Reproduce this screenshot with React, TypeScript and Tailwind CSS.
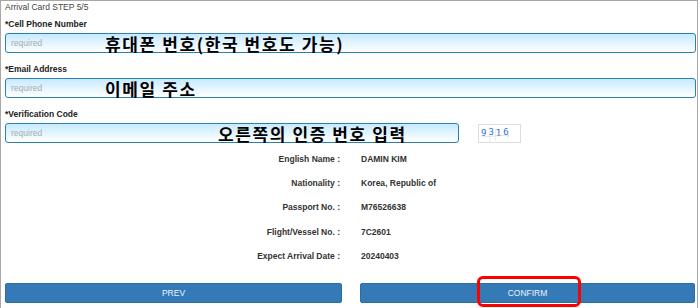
import React from "react";

const rows = [
  { label: "English Name :", value: "DAMIN KIM" },
  { label: "Nationality :", value: "Korea, Republic of" },
  { label: "Passport No. :", value: "M76526638" },
  { label: "Flight/Vessel No. :", value: "7C2601" },
  { label: "Expect Arrival Date :", value: "20240403" },
];

const Field = ({ note, noteLeft, short }: { note: string; noteLeft: string; short?: boolean }) => (
  <div
    className={`relative h-[20px] rounded-[3px] border border-[#2a7fb5] bg-linear-to-b from-[#c6eaff] to-white flex items-center pl-[5px] ${
      short ? "w-[454px]" : "w-[691px]"
    }`}
  >
    <span className="text-[8.5px] text-[#aaaaaa]">required</span>
    <span
      className={`absolute ${noteLeft} top-1/2 -translate-y-1/2 whitespace-nowrap text-[17px] font-bold leading-none tracking-[1.6px] text-black [font-family:'Noto_Sans_CJK_KR',sans-serif]`}
    >
      {note}
    </span>
  </div>
);

const Label = ({ children, top }: { children: React.ReactNode; top: string }) => (
  <div className={`${top} h-[12px] leading-[12px] text-[8.5px] font-bold text-[#222]`}>{children}</div>
);

export default function App() {
  return (
    <div className="w-[698px] h-[308px] overflow-hidden bg-white border-l border-t border-r border-[#a8a8a8] pl-[4px] pr-[1px] [font-family:'Liberation_Sans',Arial,sans-serif]">
      <div className="h-[12px] leading-[12px] text-[8.5px] text-[#444]">Arrival Card STEP 5/5</div>

      <Label top="mt-[5px]">*Cell Phone Number</Label>
      <div className="mt-[3px]">
        <Field note="휴대폰 번호(한국 번호도 가능)" noteLeft="left-[99px]" />
      </div>

      <Label top="mt-[10px]">*Email Address</Label>
      <div className="mt-[3px]">
        <Field note="이메일 주소" noteLeft="left-[99px]" />
      </div>

      <Label top="mt-[10px]">*Verification Code</Label>
      <div className="mt-[3px] flex items-center gap-[19px]">
        <Field note="오른쪽의 인증 번호 입력" noteLeft="left-[212px]" short />
        <div className="relative w-[43px] h-[19px] border border-[#dddddd] bg-white flex items-center pl-[2px] gap-[2px] text-[9px] text-[#2f74c0] [font-family:'DejaVu_Sans_Mono',monospace]">
          <span className="translate-y-[1px]">9</span>
          <span>3</span>
          <span className="translate-y-[1px]">1</span>
          <span>6</span>
          <svg className="absolute inset-0" width="43" height="19" viewBox="0 0 43 19">
            <path d="M2 12 L30 10" stroke="#c8d6e6" strokeWidth="0.6" fill="none" />
            <path d="M10 2 L11 17" stroke="#d6d6d6" strokeWidth="0.5" fill="none" />
            <path d="M17 3 L16 16" stroke="#d6d6d6" strokeWidth="0.5" fill="none" />
            <circle cx="29" cy="11" r="0.6" fill="#8aa8cc" />
          </svg>
        </div>
      </div>

      <div className="mt-[4px]">
        {rows.map((r) => (
          <div key={r.label} className="h-[24.3px] flex items-center text-[8.5px] font-bold text-[#333]">
            <div className="w-[335px] text-right">{r.label}</div>
            <div className="ml-[21px]">{r.value}</div>
          </div>
        ))}
      </div>

      <div className="mt-[15px] flex items-start gap-[18px] pr-[1px]">
        <button className="block flex-1 h-[20px] rounded-[2px] border border-[#2e6da4] bg-[#337ab7] text-[8.5px] text-[#eef4ff]">
          PREV
        </button>
        <div className="relative flex-1 h-[20px]">
          <button className="block w-full h-[20px] rounded-[2px] border border-[#2e6da4] bg-[#337ab7] text-[8.5px] text-[#eef4ff]">
            CONFIRM
          </button>
          <div className="absolute left-[117px] top-[-7px] w-[104px] h-[31px] rounded-[6px] border-[3px] border-[#ff0000]" />
        </div>
      </div>
    </div>
  );
}
